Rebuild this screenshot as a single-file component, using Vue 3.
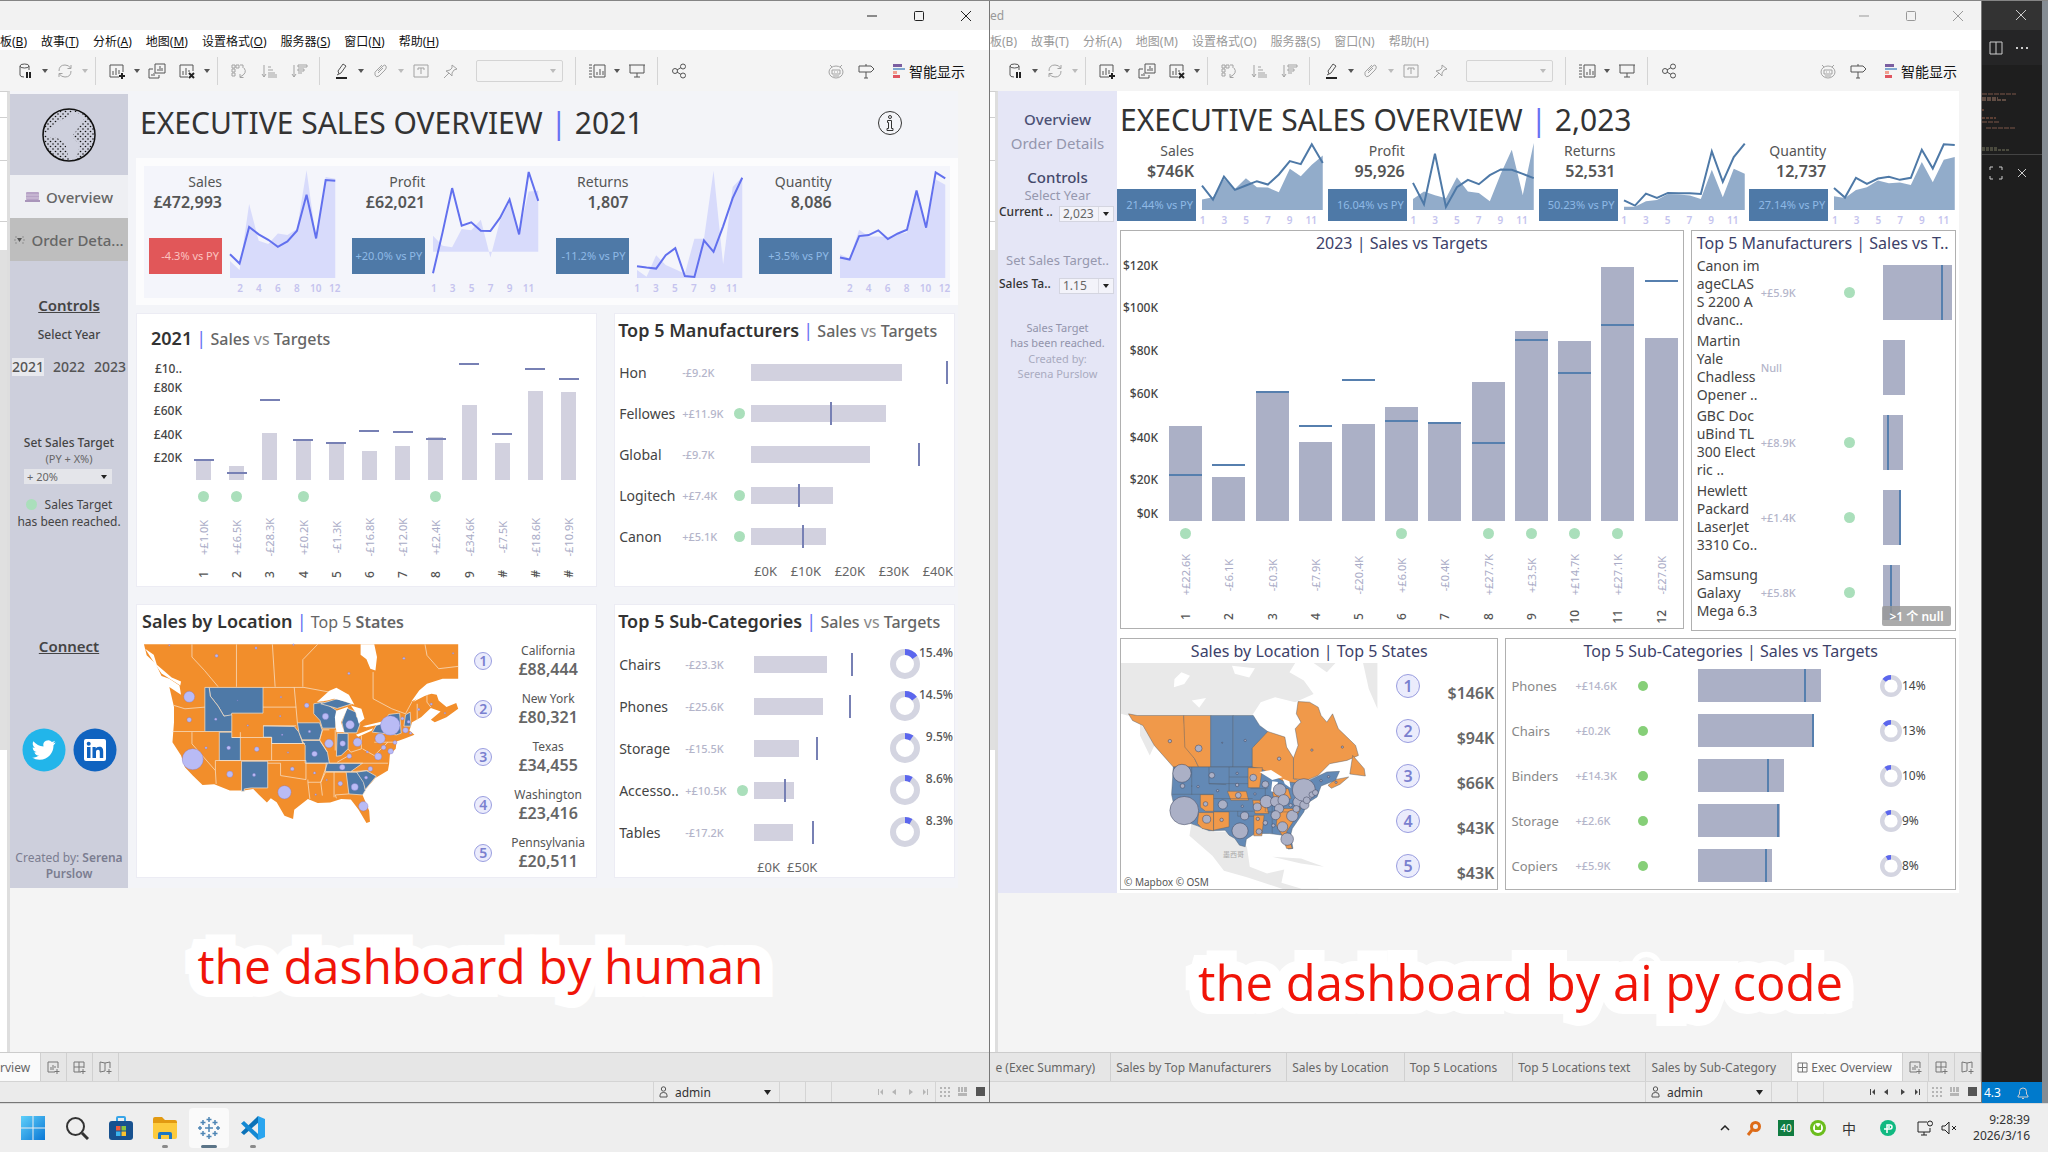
<template>
  <div class="desktop">
    <div class="stage">
      <section v-for="win in windows" :key="win.kind" class="window" :class="win.kind">
        <header class="titlebar">
          <span class="doc-name">{{ win.docName }}</span>
          <button class="win-btn" aria-label="Minimize">
            <svg width="12" height="12" viewBox="0 0 12 12"><path d="M1 6h10" /></svg>
          </button>
          <button class="win-btn" aria-label="Maximize">
            <svg width="12" height="12" viewBox="0 0 12 12"><rect x="1.5" y="1.5" width="9" height="9" rx="1" /></svg>
          </button>
          <button class="win-btn" aria-label="Close">
            <svg width="12" height="12" viewBox="0 0 12 12"><path d="M1 1l10 10M11 1L1 11" /></svg>
          </button>
        </header>

        <nav class="menubar">
          <a v-for="m in menus" :key="m.key" href="#">{{ m.label }}(<span>{{ m.key }}</span>)</a>
        </nav>

        <div class="toolbar">
          <template v-for="(t, i) in tools" :key="i">
            <span v-if="t.name === 'sep'" class="sep"></span>
            <button v-else-if="t.name === 'caret'" class="caret" :class="{ off: t.off }" aria-label="More">
              <svg width="6" height="4" viewBox="0 0 6 4"><path d="M0 0h6L3 4z" /></svg>
            </button>
            <button v-else-if="t.name === 'combo'" class="combo" aria-label="Fit">
              <svg width="6" height="4" viewBox="0 0 6 4"><path d="M0 0h6L3 4z" /></svg>
            </button>
            <button v-else class="tool" :class="{ off: t.off }" :aria-label="t.name">
              <svg width="18" height="16" viewBox="0 0 18 16">
                <path :d="icons[t.name]" />
                <path v-if="heavy[t.name]" class="heavy" :d="heavy[t.name]" />
              </svg>
            </button>
          </template>
          <span class="spring"></span>
          <button class="tool off" aria-label="Assistant">
            <svg width="18" height="16" viewBox="0 0 18 16"><path :d="icons.robot" /></svg>
          </button>
          <button class="tool sign" aria-label="Guide">
            <svg width="18" height="16" viewBox="0 0 18 16"><path :d="icons.sign" /></svg>
          </button>
          <button class="show-me">
            <svg width="12" height="14" viewBox="0 0 12 14">
              <rect width="9" height="3" fill="#7b5ea0" />
              <rect y="4" width="12" height="2" fill="#7fa8d0" />
              <rect y="7" width="4" height="3" fill="#f0a090" />
              <rect y="11" width="7" height="3" fill="#e05560" />
            </svg>
            智能显示
          </button>
        </div>

        <div class="body">
          <div class="shelf"><i></i><i></i><i></i><i></i></div>
          <div class="view">
            <div class="dashboard">
              <aside v-if="win.kind === 'human'" class="side">
                <div class="logo">
                  <svg width="54" height="54" viewBox="0 0 54 54">
                    <defs>
                      <pattern id="dots" width="5" height="5" patternUnits="userSpaceOnUse">
                        <circle cx="1" cy="1" r="0.8" fill="#111" />
                        <circle cx="3.5" cy="3.5" r="0.8" fill="#111" />
                      </pattern>
                    </defs>
                    <circle cx="27" cy="27" r="26" fill="url(#dots)" />
                    <path d="M31 3q8 3 12 7-6 6-8 12l-5 6q4 6 8 8-1 8-5 16-6 0-7-4 0-10-6-15-7-6-14-3l-3-4q8-10 18-15 8-2 10-8z" fill="#ced0dd" />
                    <circle cx="27" cy="27" r="26" fill="none" stroke="#111" stroke-width="1.5" />
                  </svg>
                </div>
                <button class="nav-item current">
                  <svg width="15" height="10" viewBox="0 0 15 10">
                    <rect x="1" width="13" height="8" rx="1" fill="#b7a3c6" />
                    <path d="M1 3h13M1 6h13" stroke="#d3c6dc" />
                    <rect y="8" width="15" height="2" fill="#a995ba" />
                  </svg>
                  Overview
                </button>
                <button class="nav-item dim">
                  <svg width="11" height="8" viewBox="0 0 11 8">
                    <path d="M1 1h2M1 7h2M8 1h2M8 7h2M1 3v2M10 3v2" stroke="#8f8f8f" />
                    <path d="M3 2h5L5.500 6z" fill="#555" />
                  </svg>
                  Order Deta...
                </button>
                <h3>Controls</h3>
                <p class="select-year">Select Year</p>
                <div class="years">
                  <button v-for="y in [2021, 2022, 2023]" :key="y" :class="{ on: y === year }" @click="year = y">{{ y }}</button>
                </div>
                <label class="target-label" for="uplift">Set Sales Target<small>(PY + X%)</small></label>
                <div class="picker">
                  <select id="uplift"><option>+ 20%</option></select>
                </div>
                <p class="legend"><span class="dot"></span>Sales Target<br />has been reached.</p>
                <h3 class="connect">Connect</h3>
                <div class="social">
                  <a href="#" aria-label="Twitter">
                    <svg width="44" height="44" viewBox="0 0 44 44">
                      <circle cx="22" cy="22" r="21.5" fill="#22b5ea" />
                      <path transform="translate(10 10)" fill="#fff" d="M23.6 4.6a9.6 9.6 0 0 1-2.8.8 4.9 4.9 0 0 0 2.2-2.7 9.8 9.8 0 0 1-3.1 1.2 4.9 4.9 0 0 0-8.4 4.5A14 14 0 0 1 1.4 3.2a4.9 4.9 0 0 0 1.5 6.6 4.9 4.9 0 0 1-2.2-.6v.1a4.9 4.9 0 0 0 3.9 4.8 4.9 4.9 0 0 1-2.2.1 4.9 4.9 0 0 0 4.6 3.4A9.9 9.9 0 0 1 0 19.6a14 14 0 0 0 7.5 2.2c9.1 0 14-7.5 14-14v-.6a10 10 0 0 0 2.1-2.6z" />
                    </svg>
                  </a>
                  <a href="#" aria-label="LinkedIn">
                    <svg width="44" height="44" viewBox="0 0 44 44">
                      <circle cx="22" cy="22" r="21.5" fill="#0f63c0" />
                      <rect x="11" y="11" width="22" height="22" rx="2" fill="#fff" />
                      <path fill="#0f63c0" d="M14 19h3.5v11H14zM19.5 19h3.200v1.600c.6-1 1.700-1.900 3.500-1.900 3.300 0 4 2 4 5V30h-3.400v-5.500c0-1.400-.2-2.700-1.800-2.700s-2 1.200-2 2.600V30h-3.500z" />
                      <circle cx="15.7" cy="15.7" r="2" fill="#0f63c0" />
                    </svg>
                  </a>
                </div>
                <p class="author">Created by: <b>Serena</b><br /><b>Purslow</b></p>
              </aside>

              <aside v-else class="side">
                <a class="side-link strong" href="#">Overview</a>
                <a class="side-link" href="#">Order Details</a>
                <h3>Controls</h3>
                <p class="hint">Select Year</p>
                <div class="param">
                  <label for="cy">Current ..</label>
                  <div class="picker"><select id="cy"><option>2,023</option></select></div>
                </div>
                <p class="hint gap">Set Sales Target..</p>
                <div class="param">
                  <label for="st">Sales Ta..</label>
                  <div class="picker"><select id="st"><option>1.15</option></select></div>
                </div>
                <p class="note">Sales Target<br />has been reached.</p>
                <p class="note pale">Created by:<br />Serena Purslow</p>
              </aside>

              <main class="main">
                <div class="headline">
                  <h1>EXECUTIVE SALES OVERVIEW <i>|</i> {{ win.year }}</h1>
                  <button v-if="win.kind === 'human'" class="info" aria-label="Info">
                    <svg width="26" height="26" viewBox="0 0 26 26">
                      <circle cx="13" cy="13" r="11.5" />
                      <circle cx="13" cy="7" r="1.5" />
                      <path d="M10.5 10.5h4v8h1.5v2h-6v-2h1.5v-6h-1z" />
                    </svg>
                  </button>
                </div>

                <div class="kpis">
                  <div class="kpi-inner">
                    <article v-for="k in win.kpis" :key="k.label" class="kpi">
                      <div class="kpi-text">
                        <span class="kpi-label">{{ k.label }}</span>
                        <strong>{{ k.value }}</strong>
                        <span class="badge" :class="{ bad: k.bad }">{{ k.change }}</span>
                      </div>
                      <div class="spark">
                        <svg :viewBox="`0 0 330 ${win.sparkMax}`" preserveAspectRatio="none">
                          <polygon :points="area(k.prior, win.sparkMax, k.base)" />
                          <polyline :points="line(k.current, win.sparkMax)" />
                        </svg>
                        <div class="ticks">
                          <span v-for="n in 12" :key="n">{{ n % 2 === k.odd ? n : '' }}</span>
                        </div>
                      </div>
                    </article>
                  </div>
                </div>

                <div class="cards">
                  <section class="card trend">
                    <h2><b>{{ win.titleYear }}</b> <i>|</i> <span>Sales <em>vs</em> Targets</span></h2>
                    <div class="plot-wrap">
                      <div class="y-axis">
                        <span v-for="t in win.trend.ticks" :key="t[0]" :style="{ bottom: t[1] / win.trend.max * 100 + '%' }">{{ t[0] }}</span>
                      </div>
                      <div class="months">
                        <div v-for="(m, i) in win.trend.months" :key="i" class="month">
                          <div class="column">
                            <div class="fill" :style="{ height: m[0] / win.trend.max * 100 + '%' }"></div>
                            <div class="goal" :style="{ bottom: m[1] / win.trend.max * 100 + '%' }"></div>
                          </div>
                          <div class="hit"><span v-if="m[2][0] === '+'" class="dot"></span></div>
                          <div class="diff"><span>{{ m[2] }}</span></div>
                          <div class="num"><span>{{ m[3] }}</span></div>
                        </div>
                      </div>
                    </div>
                  </section>

                  <section class="card makers">
                    <h2>
                      <b>Top 5 Manufacturers</b> <i>|</i>
                      <span v-if="win.kind === 'human'"> Sales <em>vs</em> Targets</span>
                      <span v-else> Sales vs T..</span>
                    </h2>
                    <div class="rows">
                      <div v-for="r in win.makers.rows" :key="r.name" class="row">
                        <span class="name">{{ r.name }}</span>
                        <span class="delta">{{ r.diff }}</span>
                        <span><span v-if="r.diff[0] === '+'" class="dot"></span></span>
                        <div class="track">
                          <div class="fill" :style="{ width: r.bar / win.makers.max * 100 + '%' }"></div>
                          <div v-if="r.goal" class="goal" :style="{ left: r.goal / win.makers.max * 100 + '%' }"></div>
                        </div>
                      </div>
                    </div>
                    <div v-if="win.kind === 'human'" class="x-axis">
                      <span>£0K</span><span>£10K</span><span>£20K</span><span>£30K</span><span>£40K</span>
                    </div>
                    <button v-else class="null-tag">&gt;1 个 null</button>
                  </section>

                  <section class="card location">
                    <h2><b>Sales by Location</b> <i>|</i> <span>Top 5 <strong>States</strong></span></h2>
                    <div class="geo">
                      <svg v-if="win.kind === 'human'" class="map" viewBox="370 160 815 560" preserveAspectRatio="none">
                        <path class="land" d="M375 167H1180V270L1140 270 1100 285 1080 305 1060 338 1090 322 1112 315 1125 318 1130 335 1150 355 1175 343 1180 360 1150 385 1120 400 1110 393 1135 368 1110 358 1085 385 1062 400 1055 425 1068 438 1045 448 1022 458 1020 480 1005 497 1003 525 1000 545 968 567 940 605 935 618 952 665 954 698 945 702 925 662 905 632 880 630 852 641 820 642 795 630 760 662 757 690 735 680 715 640 700 628 690 641 670 618 655 600 630 605 595 605 555 586 525 588 500 560 480 535 470 500 448 460 452 400 452 355 440 295 470 318 466 290 440 270 420 262 405 225 382 200z" />
                        <g class="blue">
                          <path d="M542 296H680V373H600L598 382H580L565 352 545 322z" />
                          <path d="M531 296h11l3 26 20 30 15 30 20-4V428H531z" />
                          <path d="M568 430H600V446H622V515H568z" />
                          <path d="M625 517H692V597H650L632 600V607H625z" />
                          <path d="M681 411l79 2 12 17 10 34H702V445H681z" />
                          <path d="M768 402h57l7 23-7 28H780l-8-23z" />
                          <path d="M780 455h45l20 35 5 33H788V470z" />
                          <path d="M810 345l25-5 33 25-2 53H832l-6-23-16-20z" />
                          <path d="M828 345l42-15 38 15-38 14z" />
                          <path d="M888 432l-6-32 13-42 23 12 2 15 5-5 3 28-8 24z" />
                          <path d="M870 434H898V480L880 500 868 502z" />
                          <path d="M960 430l10-20 20-8 12-25 28-4 4 60-12 5z" />
                          <path d="M1045 378l12-8 2 42h-18z" />
                          <path d="M842 523h93l-30 25h-65z" />
                          <path d="M893 550h29l18 25 2 30-7 13-35-3z" />
                          <path d="M920 550l25-5 25 17-28 40-5-22z" />
                        </g>
                        <path class="border" d="M498 167V205L530 245 565 294M612 167V294M704 167L711 294M820 167L782 213V294M452 350L480 360 531 355M448 428H531M498 430V465L558 545 560 585M568 515H558V545M622 446V430M600 446H702V515H568M702 464H788M680 355H765M760 296L768 402M692 523H725V560L790 572V515H702M790 523H845L828 580H795V572M795 580L800 630M828 580L832 620M862 550V625M893 550H840L828 580M900 615L865 618 868 628M850 523H1000M898 480L905 490 932 480V440M935 480L965 500 1000 460M965 460H1018M850 423H832L825 453 845 490M865 423V485M962 250V330L1010 360 1045 375M680 411H765M680 296H785L850 310M1095 167L1100 200 1130 240 1180 233M1062 338L1045 375M1075 345V395M1100 318V340L1110 355M905 548L955 545M900 500L870 520" />
                        <g class="water">
                          <path d="M930 167H965L972 205 968 245 955 240 945 212 930 198z" />
                          <path d="M818 340L850 306 868 297 900 318 914 348 890 338 862 330 845 335z" />
                          <path d="M868 366L898 354 880 400 888 430 868 430 864 385z" />
                          <path d="M905 350L932 360 940 390 925 404 918 372z" />
                          <path d="M935 412L985 398 988 405 945 415zM918 438L962 418 958 426 924 444z" />
                          <path d="M378 180l22 18 8 30 38 38 24 12-2 12-48-36-18-30z" />
                          <path d="M1064 340l45-46 40-20 30 2v8l-35 8-50 30z" />
                        </g>
                        <ellipse v-for="(b, i) in usBubbles" :key="i" class="bubble" :cx="b[0]" :cy="b[1]" :rx="b[2]" :ry="b[2] * 1.17" />
                      </svg>
                      <div v-else class="map-box">
                        <svg class="map" viewBox="37 122 447 680" preserveAspectRatio="none">
                          <path class="grey" d="M37 122H340L330 150 355 175 372 215 340 240 305 225 280 240 265 280H48L37 275zM372 122H410L395 150zM458 122H483V260L468 200z" />
                          <path class="grey" d="M160 600l30 28 28 2 38 45 5 60 30 20 30-12-5 40 35 18h30l-10 8h-40l-75-42-40-20-20-45-40-60zM300 705l50 5 40 25-40-10zM70 300l25 70-8 30-17-60z" />
                          <path class="water" d="M130 170l12-20 15 10-10 25-18 10zM160 235l25-8-12 30zM230 130l40 8-10 28-25-12z" />
                          <g class="amber">
                            <path d="M50 275l15 5h81l4 75 22 80h-44l-33-65-20-60-18-15z" />
                            <path d="M146 280h47v155h-21l-7-25-17-35z" />
                            <path d="M265 378l27-50 30 17 3 30 12 33v62l18 8-14 12-26-14-15-18-20-18h-15z" />
                            <path d="M337 408l8-38-5-50 10-20-8-25 3-37 20 2 15 15 5 25 10 20 10-25 10 45 15 25 15 25 5 30-20 15-30 10-20 35-20 15-23-5z" />
                            <path d="M440 400l20 40 2 22-27-6zM397 490l12-17 24-8-15 22-15 12z" />
                          </g>
                          <g class="navy">
                            <path d="M193 280h39v155h-39z" />
                            <path d="M232 280h35l11 30 14 18-27 50v57h-33z" />
                            <path d="M128 435h137l15 5 20 20 20 18 32 7 18-15 25-20 22-2-7 27-25 17-7 33-18 20-5 25-20 50-3 20 4 40-8 2-10-42-23-5-25 0-15 17-2 23-10-5-8-20-10-10-7-15-28 2-20-15-20-12-20-42-5-40z" />
                          </g>
                          <g class="amber">
                            <path d="M258 437h25l-5 60h-20z" />
                            <path d="M222 508h33l4 27h-31z" />
                            <path d="M175 518h23v50h-14l-9-12z" />
                            <path d="M172 572h26v55l-20-7-8-15z" />
                            <path d="M198 570h27v45l-27 10z" />
                            <path d="M266 535h22l6 40h-24zM268 580h18l-4 62h-14z" />
                            <path d="M300 500h28l5 30-30 10zM310 560h40l-10 30-15 40 10 50-10 0-8-40-10-30z" />
                          </g>
                          <path class="edge" d="M160 435v60M190 435v50l30 3M126 517h72M160 490v28M225 435v50M190 485h68M225 465h33M225 485v23M198 530h68M228 568h40M198 568h30M240 568v15h28M288 500v70M300 535v100M262 500h30M312 540v30M290 570h40" />
                          <path class="water" d="M278 450l20-6 20 22-18 8zM300 478l10 2-4 32-8-4zM318 470l12 8 2 20-10-12z" />
                          <ellipse v-for="(b, i) in naBubbles" :key="i" class="bubble" :cx="b[0]" :cy="b[1]" :rx="b[2]" :ry="b[2] * 1.7" />
                        </svg>
                        <span class="country">墨西哥</span>
                        <small>© Mapbox © OSM</small>
                      </div>
                      <ol class="states">
                        <li v-for="(s, i) in win.states" :key="i">
                          <span class="rank">{{ i + 1 }}</span>
                          <span class="state"><span v-if="s[0]">{{ s[0] }}</span><b>{{ s[1] }}</b></span>
                        </li>
                      </ol>
                    </div>
                  </section>

                  <section class="card subcats">
                    <h2><b>Top 5 Sub-Categories</b> <i>|</i> <span>Sales <em>vs</em> Targets</span></h2>
                    <div class="rows">
                      <div v-for="r in win.subcats.rows" :key="r.name" class="row">
                        <span class="name">{{ r.name }}</span>
                        <span class="delta">{{ r.diff }}</span>
                        <span><span v-if="r.diff[0] === '+'" class="dot"></span></span>
                        <div class="track">
                          <div class="fill" :style="{ width: r.bar / win.subcats.max * 100 + '%' }"></div>
                          <div class="goal" :style="{ left: r.goal / win.subcats.max * 100 + '%' }"></div>
                        </div>
                        <div class="share">
                          <svg viewBox="0 0 30 30">
                            <circle cx="15" cy="15" r="12" />
                            <circle class="slice" cx="15" cy="15" r="12" pathLength="100" :stroke-dasharray="`${parseFloat(r.share)} 100`" />
                          </svg>
                          <span>{{ r.share }}</span>
                        </div>
                      </div>
                    </div>
                    <div v-if="win.kind === 'human'" class="x-axis"><span>£0K</span><span>£50K</span></div>
                  </section>
                </div>
              </main>
            </div>
            <p class="caption">{{ win.caption }}</p>
          </div>
        </div>

        <nav class="sheets">
          <a v-for="s in win.sheets" :key="s" href="#" :class="{ active: s === win.sheet }">
            <svg v-if="s === 'Exec Overview'" width="11" height="11" viewBox="0 0 11 11"><path d="M1 1h9v9H1zM5.5 1v9M1 5.5h9" /></svg>{{ s }}
          </a>
          <button v-for="n in newSheet" :key="n.label" :aria-label="n.label">
            <svg width="13" height="13" viewBox="0 0 13 13"><path :d="n.d" /></svg>
          </button>
        </nav>

        <footer class="status">
          <button class="user">
            <svg width="9" height="12" viewBox="0 0 9 12"><circle cx="4.5" cy="3" r="2.2" /><path d="M1 11V9q0-2.500 3.500-2.500T8 9v2z" /></svg>
            admin
            <svg class="tri" width="7" height="5" viewBox="0 0 7 5"><path d="M0 0h7L3.500 5z" /></svg>
          </button>
          <span class="cell"></span><span class="cell"></span>
          <span class="pager">
            <svg width="54" height="8" viewBox="0 0 54 8"><path d="M1 1v6h1V1zM6 1v6L3 4zM19 1v6l-4-3zM32 1v6l4-3zM46 1v6l3-3zM50 1v6h1V1z" /></svg>
          </span>
          <span class="modes">
            <svg width="46" height="10" viewBox="0 0 46 10">
              <path fill="#b5b5b5" d="M0 0h2v2H0zM4 0h2v2H4zM8 0h2v2H8zM0 4h2v2H0zM4 4h2v2H4zM8 4h2v2H8zM0 8h2v2H0zM4 8h2v2H4zM8 8h2v2H8zM18 0h2v5h-2zM21 0h2v5h-2zM24 0h3v5h-3zM18 6h9v3h-9z" />
              <path fill="#555" d="M36 0h9v9h-9z" />
            </svg>
          </span>
        </footer>
      </section>

      <section class="editor">
        <div class="editor-title">
          <svg width="12" height="12" viewBox="0 0 12 12"><path d="M1 1l10 10M11 1L1 11" /></svg>
        </div>
        <div class="editor-tabs">
          <svg width="14" height="14" viewBox="0 0 14 14"><path d="M1 1h12v12H1zM7 1v12" /></svg>
          <svg width="14" height="14" viewBox="0 0 14 14"><path d="M1 7h2M6 7h2M11 7h2" stroke-width="2" /></svg>
        </div>
        <div class="minimap">
          <svg width="36" height="62" viewBox="0 0 36 62">
            <path d="M0 2h34M0 30h18M4 36h29" stroke="#7c5648" stroke-dasharray="5 1" />
            <path d="M0 6h16M0 8h24" stroke="#a07a68" stroke-dasharray="4 1" />
            <path d="M0 26h14M0 18h2" stroke="#98604a" stroke-dasharray="3 1" />
            <path d="M0 56h16M0 58h28" stroke="#77775f" stroke-dasharray="3 1" />
          </svg>
        </div>
        <div class="editor-panel">
          <svg width="14" height="14" viewBox="0 0 14 14"><path d="M1 4V1h3M10 1h3v3M13 10v3h-3M4 13H1v-3" /></svg>
          <svg width="12" height="12" viewBox="0 0 12 12"><path d="M2 2l8 8M10 2l-8 8" /></svg>
        </div>
        <div class="editor-status">
          <span>4.3</span>
          <svg width="14" height="14" viewBox="0 0 14 14"><path d="M2 11V10l1.500-2V5.500a3.500 3.500 0 0 1 7 0V8l1.500 2v1zM6 12.500h2" /></svg>
        </div>
      </section>
      <div class="edge-strip"></div>
    </div>

    <footer class="taskbar">
      <div class="apps">
        <button aria-label="Start">
          <svg width="24" height="24" viewBox="0 0 24 24">
            <defs><linearGradient id="win" x1="0" y1="0" x2="1" y2="1"><stop stop-color="#5fd0fa" /><stop offset="1" stop-color="#0a77d5" /></linearGradient></defs>
            <path fill="url(#win)" d="M0 0h11.500v11.500H0zM12.500 0H24v11.500H12.500zM0 12.500h11.500V24H0zM12.500 12.500H24V24H12.500z" />
          </svg>
        </button>
        <button aria-label="Search">
          <svg width="24" height="24" viewBox="0 0 24 24" fill="none" stroke="#333" stroke-width="2"><circle cx="10.5" cy="10.5" r="8.5" /><path d="M17 17l6 6" stroke-width="3" /></svg>
        </button>
        <button aria-label="Store">
          <svg width="24" height="24" viewBox="0 0 24 24">
            <path d="M8 6V2q0-1 1-1h6q1 0 1 1v4" fill="none" stroke="#38a5e8" stroke-width="2" />
            <rect y="5" width="24" height="19" rx="3" fill="#17518f" />
            <path fill="#f05a3c" d="M7 10h4.500v4.500H7z" /><path fill="#8bc53f" d="M12.500 10H17v4.500h-4.500z" /><path fill="#3cb4ee" d="M7 15.500h4.500V20H7z" /><path fill="#fbc22d" d="M12.500 15.500H17V20h-4.500z" />
          </svg>
        </button>
        <button class="open" aria-label="Explorer">
          <svg width="26" height="24" viewBox="0 0 26 24">
            <path fill="#e29a12" d="M1 3q0-2 2-2h7l3 3h10q2 0 2 2v6H1z" /><path fill="#fdcb3d" d="M1 7h24v14q0 2-2 2H3q-2 0-2-2z" /><path fill="#1c77c5" d="M6 23v-5q0-2 2-2h10q2 0 2 2v5h-3v-4H9v4z" />
          </svg>
        </button>
        <button class="open active" aria-label="Tableau">
          <svg width="24" height="24" viewBox="0 0 24 24" fill="none" stroke="#4f86b5" stroke-width="1.5">
            <path d="M12 8v8M8 12h8M12 1v5M9.500 3.500h5M12 18v5M9.500 20.500h5M1 12h4M3 10v4M19 12h4M21 10v4M6 4v5M3.500 6.500h5M18 4v5M15.500 6.500h5M6 15v5M3.500 17.500h5M18 15v5M15.500 17.500h5" />
          </svg>
        </button>
        <button class="open" aria-label="Code">
          <svg width="24" height="24" viewBox="0 0 24 24">
            <path fill="#0b72b8" d="M17 0L1 15.500 0 16.500 3 19 18 6z" /><path fill="#1489d3" d="M3 5L0 7.500 17 24v-6z" /><path fill="#2aa5ef" d="M17 0l7 3v18l-7 3z" />
          </svg>
        </button>
      </div>
      <div class="tray">
        <svg width="10" height="6" viewBox="0 0 10 6" fill="none" stroke="#222" stroke-width="1.5"><path d="M1 5l4-4 4 4" /></svg>
        <svg width="16" height="16" viewBox="0 0 16 16" fill="none" stroke="#dd6b18" stroke-width="3"><circle cx="9.5" cy="6.5" r="4" /><path d="M6 10l-4 5" /></svg>
        <span class="temp">40</span>
        <svg width="16" height="16" viewBox="0 0 16 16"><circle cx="8" cy="8" r="8" fill="#6bbd1d" /><circle cx="8" cy="8" r="5" fill="#fff" /><path d="M5 4l3 3 3-3v6H5z" fill="#6bbd1d" /></svg>
        <span class="ime">中</span>
        <svg class="wide" width="16" height="16" viewBox="0 0 16 16"><circle cx="8" cy="8" r="8" fill="#10b981" /><path d="M7 13V5h3q2 0 2 2t-2 2H4M8 7h2" stroke="#fff" stroke-width="1.5" fill="none" /></svg>
        <svg width="16" height="16" viewBox="0 0 16 16" fill="none" stroke="#222"><path d="M10 2H1v10h12V8M4 15h6M7 12v3" /><circle cx="13" cy="3.5" r="2.5" /></svg>
        <svg width="16" height="14" viewBox="0 0 16 14" fill="none" stroke="#222"><path d="M1 5h3l4-4v12L4 9H1zM11 5l4 4M15 5l-4 4" /></svg>
        <div class="clock">9:28:39<br />2026/3/16</div>
      </div>
    </footer>
  </div>
</template>

<script setup>
import { ref } from 'vue'

const year = ref(2021)

const menus = [
  { label: '板', key: 'B' },
  { label: '故事', key: 'T' },
  { label: '分析', key: 'A' },
  { label: '地图', key: 'M' },
  { label: '设置格式', key: 'O' },
  { label: '服务器', key: 'S' },
  { label: '窗口', key: 'N' },
  { label: '帮助', key: 'H' }
]

const icons = {
  pause: 'M13 7V3Q13 1 8.500 1T4 3V12Q4 14 8 14M4 3Q4 5 8.500 5T13 3',
  refresh: 'M3 8Q3 2 9 2q4 0 5.500 3M15 8q0 6-6 6-4 0-5.500-3M15 2v3.500h-3.500M3 14v-3.500h3.500',
  add: 'M11 14H2V2h13v7M5 12V8M8 12V5M11 11V7',
  copy: 'M7 10V1h10v9zM10 8V6M12 8V3M14 8V5M5 6H1v9h10v-3M4 13v-2M6 13v-3',
  clear: 'M10 14H2V2h13v6M5 12V8M8 12V5M11 9V7',
  swap: 'M2 2h3v3H2zM6 2h3v3H6zM10 2h3v3M2 6h3v3H2zM2 10h3v3H2zM14 5q4 5-4 9M10 11v3.500h3.500',
  asc: 'M4 2v12M2 11l2 3 2-3M8 14h9M8 12h9M8 10h7M8 7h5M8 4h3',
  desc: 'M4 2v12M2 11l2 3 2-3M8 2h9v2H8zM8 6h6v2H8zM8 10h4',
  pen: 'M7 11l-1-3 5-7 3 2-5 7zM7 11l-2 1',
  clip: 'M6 8l5-5q2-2 3 0t-1 4l-6 6q-3 2-4-1t2-5l5-5M6 10l5-5',
  text: 'M2 2h14v12H2zM6 5h6M9 5v6M6 5v2M12 5v2',
  pin: 'M10 2l5 4-3 1-2 3v3l-3-3-5 5 5-5-3-2 4-1 2-2z',
  cards: 'M6 2h11v12H6zM1 2h3M1 5h3M1 8h3M1 11h3M1 14h3M9 12V9M12 12V6M15 12V8',
  present: 'M1 2h16M2 2v8h14V2M9 10v4M6 14h6',
  share: 'M2.500 8a2.500 2.500 0 1 0 5 0a2.500 2.500 0 1 0-5 0M10.500 3.500a2.500 2.500 0 1 0 5 0a2.500 2.500 0 1 0-5 0M10.500 12.500a2.500 2.500 0 1 0 5 0a2.500 2.500 0 1 0-5 0M7 7l4-2.500M7 9l4 2.500',
  robot: 'M3 2l2 2M15 2l-2 2M2 9a7 6 0 1 0 14 0a7 6 0 1 0-14 0M5 7h8v4H5zM6 13h6M7 9h1M10 9h1',
  sign: 'M2 3h12l3 3-3 3H2zM9 1v2M9 9v6M7 15h4'
}

const heavy = {
  pause: 'M11 9v6M14 9v6',
  add: 'M14 10v6M11 13h6',
  clear: 'M11 10l5 5M16 10l-5 5',
  pen: 'M4 15h11'
}

const tools = [
  { name: 'pause' }, { name: 'caret' }, { name: 'refresh', off: true }, { name: 'caret', off: true }, { name: 'sep' },
  { name: 'add' }, { name: 'caret' }, { name: 'copy' }, { name: 'clear' }, { name: 'caret' }, { name: 'sep' },
  { name: 'swap', off: true }, { name: 'asc', off: true }, { name: 'desc', off: true }, { name: 'sep' },
  { name: 'pen' }, { name: 'caret' }, { name: 'clip', off: true }, { name: 'caret', off: true },
  { name: 'text', off: true }, { name: 'pin', off: true }, { name: 'combo' }, { name: 'sep' },
  { name: 'cards' }, { name: 'caret' }, { name: 'present' }, { name: 'sep' }, { name: 'share' }
]

const newSheet = [
  { label: 'New worksheet', d: 'M8 11H1V1h10v6M4 9V6M6 9V4M8 7V5M10 8v5M7.500 10.500h5' },
  { label: 'New dashboard', d: 'M8 11H1V1h10v6M6 1v10M1 6h10M10 8v5M7.500 10.500h5' },
  { label: 'New story', d: 'M6 10L1 11V1l5 1 5-1v6M6 2v8M10 8v5M7.500 10.500h5' }
]

const windows = [
  {
    kind: 'human',
    docName: '',
    year: '2021',
    titleYear: '2021',
    caption: 'the dashboard by human',
    sheets: ['rview'],
    sheet: 'rview',
    sparkMax: 322,
    kpis: [
      {
        label: 'Sales', value: '£472,993', change: '-4.3% vs PY', bad: true, odd: 0, base: 0,
        current: [71, 43, 152, 130, 114, 93, 109, 141, 248, 118, 292, 290],
        prior: [51, 24, 221, 111, 101, 133, 128, 146, 321, 116, 301, 296]
      },
      {
        label: 'Profit', value: '£62,021', change: '+20.0% vs PY', odd: 1, base: 78,
        current: [14, 136, 268, 156, 166, 141, 140, 179, 234, 130, 316, 230],
        prior: [126, 96, 92, 146, 142, 174, 61, 171, 226, 136, 258, 260]
      },
      {
        label: 'Returns', value: '1,807', change: '-11.2% vs PY', odd: 1, base: 0,
        current: [35, 31, 28, 68, 89, 6, 3, 112, 78, 154, 238, 299],
        prior: [24, 4, 68, 39, 26, 13, 117, 117, 320, 41, 271, 301]
      },
      {
        label: 'Quantity', value: '8,086', change: '+3.5% vs PY', odd: 0, base: 0,
        current: [61, 55, 125, 128, 142, 116, 132, 144, 261, 150, 315, 297],
        prior: [71, 58, 144, 124, 124, 122, 130, 136, 256, 148, 294, 278]
      }
    ],
    trend: {
      max: 120,
      ticks: [['£10..', 112], ['£80K', 93], ['£60K', 70], ['£40K', 46], ['£20K', 23]],
      months: [
        [21, 19, '+£1.0K', '1'], [14, 6, '+£6.5K', '2'], [47, 79, '-£28.3K', '3'], [39, 39, '+£0.2K', '4'],
        [36, 36, '-£1.3K', '5'], [29, 48, '-£16.8K', '6'], [34, 47, '-£12.0K', '7'], [43, 40, '+£2.4K', '8'],
        [75, 115, '-£34.6K', '9'], [37, 45, '-£7.5K', '#'], [89, 110, '-£18.6K', '#'], [88, 100, '-£10.9K', '#']
      ]
    },
    makers: {
      max: 200,
      rows: [
        { name: 'Hon', diff: '-£9.2K', bar: 149, goal: 193 },
        { name: 'Fellowes', diff: '+£11.9K', bar: 134, goal: 78 },
        { name: 'Global', diff: '-£9.7K', bar: 118, goal: 165 },
        { name: 'Logitech', diff: '+£7.4K', bar: 81, goal: 46 },
        { name: 'Canon', diff: '+£5.1K', bar: 74, goal: 50 }
      ]
    },
    states: [
      ['California', '£88,444'], ['New York', '£80,321'], ['Texas', '£34,455'], ['Washington', '£23,416'], ['Pennsylvania', '£20,511']
    ],
    subcats: {
      max: 135,
      rows: [
        { name: 'Chairs', diff: '-£23.3K', bar: 72, goal: 96, share: '15.4%' },
        { name: 'Phones', diff: '-£25.6K', bar: 68, goal: 94, share: '14.5%' },
        { name: 'Storage', diff: '-£15.5K', bar: 45, goal: 61, share: '9.5%' },
        { name: 'Accesso..', diff: '+£10.5K', bar: 40, goal: 30, share: '8.6%' },
        { name: 'Tables', diff: '-£17.2K', bar: 39, goal: 57, share: '8.3%' }
      ]
    }
  },
  {
    kind: 'script',
    docName: 'ed',
    year: '2,023',
    titleYear: '2023',
    caption: 'the dashboard by ai py code',
    sheets: ['e (Exec Summary)', 'Sales by Top Manufacturers', 'Sales by Location', 'Top 5 Locations', 'Top 5 Locations text', 'Sales by Sub-Category', 'Exec Overview'],
    sheet: 'Exec Overview',
    sparkMax: 200,
    kpis: [
      {
        label: 'Sales', value: '$746K', change: '21.44% vs PY', odd: 1, base: 0,
        current: [73, 31, 100, 60, 73, 86, 76, 106, 146, 137, 196, 140],
        prior: [31, 38, 93, 63, 95, 68, 67, 53, 123, 101, 135, 163]
      },
      {
        label: 'Profit', value: '95,926', change: '16.04% vs PY', odd: 1, base: 0,
        current: [81, 17, 168, 9, 68, 90, 77, 104, 121, 120, 108, 95],
        prior: [33, 55, 44, 35, 98, 55, 51, 26, 108, 180, 45, 200]
      },
      {
        label: 'Returns', value: '52,531', change: '50.23% vs PY', odd: 1, base: 0,
        current: [29, 13, 49, 36, 51, 50, 50, 48, 175, 84, 158, 198],
        prior: [10, 10, 26, 30, 48, 46, 43, 33, 120, 38, 123, 108]
      },
      {
        label: 'Quantity', value: '12,737', change: '27.14% vs PY', odd: 1, base: 0,
        current: [66, 37, 96, 78, 94, 99, 90, 96, 180, 124, 196, 194],
        prior: [41, 36, 60, 68, 88, 80, 82, 75, 143, 83, 150, 158]
      }
    ],
    trend: {
      max: 263,
      ticks: [['$120K', 255], ['$100K', 213], ['$80K', 170], ['$60K', 128], ['$40K', 84], ['$20K', 42], ['$0K', 8]],
      months: [
        [95, 45, '+£22.6K', '1'], [44, 55, '-£6.1K', '2'], [130, 128, '-£0.3K', '3'], [79, 94, '-£7.9K', '4'],
        [97, 139, '-£20.4K', '5'], [114, 99, '+£6.0K', '6'], [98, 97, '-£0.4K', '7'], [138, 77, '+£27.7K', '8'],
        [189, 179, '+£3.5K', '9'], [179, 146, '+£14.7K', '10'], [253, 194, '+£27.1K', '11'], [182, 238, '-£27.0K', '12']
      ]
    },
    makers: {
      max: 69,
      rows: [
        { name: 'Canon im\nageCLAS\nS 2200 A\ndvanc..', diff: '+£5.9K', bar: 69, goal: 58 },
        { name: 'Martin\nYale\nChadless\nOpener ..', diff: 'Null', bar: 22 },
        { name: 'GBC Doc\nuBind TL\n300 Elect\nric ..', diff: '+£8.9K', bar: 20, goal: 4 },
        { name: 'Hewlett\nPackard\nLaserJet\n3310 Co..', diff: '+£1.4K', bar: 17, goal: 16 },
        { name: 'Samsung\nGalaxy\nMega 6.3', diff: '+£5.8K', bar: 17, goal: 7 }
      ]
    },
    states: [['', '$146K'], ['', '$94K'], ['', '$66K'], ['', '$43K'], ['', '$43K']],
    subcats: {
      max: 181,
      rows: [
        { name: 'Phones', diff: '+£14.6K', bar: 122, goal: 105, share: '14%' },
        { name: 'Chairs', diff: '+£0.2K', bar: 115, goal: 113, share: '13%' },
        { name: 'Binders', diff: '+£14.3K', bar: 85, goal: 68, share: '10%' },
        { name: 'Storage', diff: '+£2.6K', bar: 81, goal: 78, share: '9%' },
        { name: 'Copiers', diff: '+£5.9K', bar: 73, goal: 66, share: '8%' }
      ]
    }
  }
]

// x, y, r
const usBubbles = [
  [440, 170, 2], [561, 201, 4], [662, 178, 3], [758, 168, 2], [900, 254, 3], [1041, 209, 3], [1167, 194, 2],
  [491, 324, 14], [491, 393, 6], [559, 391, 3], [615, 335, 1], [641, 410, 2], [534, 477, 3], [500, 511, 27],
  [592, 477, 5], [664, 481, 6], [595, 556, 8], [657, 558, 4], [726, 325, 2], [724, 382, 2], [729, 438, 2],
  [744, 491, 2], [755, 540, 5], [735, 610, 17], [792, 350, 6], [799, 428, 3], [812, 495, 7], [812, 552, 3],
  [815, 617, 2], [840, 383, 8], [903, 408, 11], [849, 464, 11], [884, 464, 7], [922, 460, 11], [901, 502, 6],
  [883, 535, 7], [843, 573, 2], [878, 584, 6], [915, 594, 9], [944, 566, 4], [955, 540, 6], [937, 652, 12],
  [975, 503, 9], [947, 489, 3], [980, 449, 13], [1006, 410, 25], [989, 476, 6], [1007, 487, 7], [1018, 461, 5],
  [1037, 389, 4], [1053, 399, 4], [1045, 424, 7], [1058, 433, 3], [1079, 362, 3], [1111, 346, 3], [1146, 373, 2]
]

const naBubbles = [
  [122, 357, 3], [172, 379, 6], [213, 362, 1], [253, 355, 2], [312, 410, 3], [369, 384, 2], [422, 375, 2],
  [143, 454, 16], [195, 460, 5], [239, 454, 2], [267, 467, 6], [144, 492, 4], [171, 494, 2], [205, 506, 2],
  [239, 489, 3], [241, 520, 5], [270, 516, 2], [288, 487, 6], [147, 566, 25], [184, 546, 4], [214, 548, 8],
  [248, 553, 2], [274, 555, 7], [186, 592, 7], [212, 594, 3], [252, 582, 7], [275, 591, 3], [244, 627, 14],
  [277, 629, 5], [288, 603, 4], [302, 611, 3], [313, 504, 11], [290, 539, 11], [306, 539, 9], [320, 535, 10],
  [312, 560, 8], [306, 580, 8], [335, 582, 10], [318, 615, 9], [326, 652, 11], [345, 540, 9], [342, 561, 6],
  [356, 549, 8], [355, 504, 20], [360, 535, 6], [369, 518, 5], [375, 512, 5], [332, 550, 3], [385, 476, 2],
  [398, 464, 2], [411, 481, 2]
]

function line(values, max) {
  return values.map((v, i) => `${i * 30},${max - v}`).join(' ')
}

function area(values, max, base) {
  return `0,${max - base} ${line(values, max)} 330,${max - base}`
}
</script>

<style>
body {
  margin: 0;
  overflow: hidden;
}
</style>

<style scoped>
.desktop {
  display: flex;
  flex-direction: column;
  height: 100vh;
  background: #eeeeee;
  font-family: "Noto Sans", "Noto Sans CJK SC", sans-serif;
  color: #333;
}

.desktop * {
  box-sizing: border-box;
}

.stage {
  flex: 1;
  min-height: 0;
  display: grid;
  grid-template-columns: 990fr 992fr 60fr 6fr;
  border-top: 1px solid #858585;
}

button {
  font: inherit;
  color: inherit;
  background: none;
  border: 0;
  padding: 0;
}

a {
  color: inherit;
  text-decoration: none;
}

p, h1, h2, h3, ol {
  margin: 0;
  padding: 0;
  font-weight: 400;
}

i, em {
  font-style: normal;
}

select {
  appearance: none;
  font: inherit;
  color: inherit;
  border: 0;
  background: none;
  width: 100%;
}

/* window chrome */
.window {
  display: flex;
  flex-direction: column;
  min-width: 0;
  min-height: 0;
  overflow: hidden;
  background: #f4f4f4;
  border-right: 1px solid #777;
  border-bottom: 1px solid #777;
}

.titlebar {
  display: flex;
  height: 29px;
  background: #f2f2f2;
}

.doc-name {
  flex: 1;
  font-size: 12px;
  line-height: 30px;
  color: #999;
}

.win-btn {
  width: 47px;
  display: grid;
  place-items: center;
}

.win-btn svg {
  fill: none;
  stroke: #222;
}

.script .win-btn svg {
  stroke: #999;
}

.menubar {
  display: flex;
  gap: 14px;
  height: 20px;
  background: #fff;
  font-size: 12px;
  line-height: 23px;
  color: #111;
  white-space: nowrap;
}

.menubar span {
  text-decoration: underline;
}

.script .menubar {
  color: #999;
}

.script .menubar span {
  text-decoration: none;
}

.toolbar {
  display: flex;
  align-items: center;
  height: 41px;
  padding: 0 24px 0 10px;
}

.tool {
  width: 30px;
  height: 28px;
  display: grid;
  place-items: center;
}

.tool svg {
  fill: none;
  stroke: #555;
}

.tool .heavy {
  stroke: #222;
  stroke-width: 2;
}

.tool.off {
  opacity: 0.5;
}

.caret {
  width: 10px;
  display: grid;
  place-items: center;
}

.caret svg {
  fill: #555;
}

.caret.off svg, .combo svg {
  fill: #bbb;
}

.sep {
  width: 1px;
  height: 28px;
  margin: 0 6px 0 5px;
  background: #d4d4d4;
}

.combo {
  display: flex;
  align-items: center;
  justify-content: flex-end;
  width: 87px;
  height: 22px;
  margin: 0 7px 0 10px;
  padding-right: 6px;
  border: 1px solid #d4d4d4;
  border-radius: 2px;
}

.spring {
  flex: 1;
}

.sign {
  margin-right: 12px;
}

.show-me {
  display: flex;
  align-items: center;
  gap: 4px;
  font-size: 14px;
  color: #111;
}

.body {
  flex: 1;
  min-height: 0;
  display: flex;
}

.shelf {
  flex: none;
  width: 10px;
  border-right: 3px solid #dedede;
  border-top: 1px solid #d0d0d0;
  background: linear-gradient(#e0e0e0, #e0e0e0) 0 158px / 100% 500px no-repeat #fff;
}

.shelf i {
  display: block;
  height: 26px;
  border-bottom: 1px solid #d0d0d0;
}

.shelf i:nth-child(2) {
  height: 43px;
}

.shelf i:nth-child(3) {
  height: 61px;
}

.shelf i:nth-child(4) {
  border: 0;
}

.view {
  flex: 1;
  min-width: 0;
}

.dashboard {
  display: flex;
  margin-right: 31px;
}

.main {
  flex: 1;
  min-width: 0;
}

.caption {
  text-align: center;
  color: #f01408;
  font-family: "Open Sans", "Noto Sans", sans-serif;
  font-size: 49px;
  line-height: 64px;
  -webkit-text-stroke: 26px #fff;
  paint-order: stroke fill;
  stroke-linejoin: round;
}

/* side panel */
.side {
  flex: none;
  width: 118px;
  text-align: center;
}

.human .dashboard {
  padding-top: 3px;
  background: #f3f4f8;
}

.human .side {
  background: #cdcfdc;
  color: #444;
}

.logo {
  height: 81px;
  padding-top: 14px;
}

.nav-item {
  display: flex;
  align-items: center;
  justify-content: center;
  gap: 6px;
  width: 100%;
  height: 43px;
  font-size: 15px;
  font-weight: 500;
  color: #666;
  white-space: nowrap;
}

.nav-item.current {
  background: #eeeff3;
}

.nav-item.dim {
  background: #bebebe;
}

.human .side h3 {
  margin-top: 34px;
  font-size: 15px;
  line-height: 20px;
  font-weight: 600;
  text-decoration: underline;
}

.select-year {
  margin-top: 10px;
  font-size: 12px;
  line-height: 20px;
  font-weight: 500;
}

.years {
  display: flex;
  justify-content: space-between;
  margin: 13px 2px 0;
  font-size: 14px;
  line-height: 18px;
  font-weight: 500;
  color: #555;
}

.years .on {
  background: #e8e9ee;
}

.target-label {
  display: block;
  margin-top: 59px;
  font-size: 12px;
  line-height: 16px;
  font-weight: 500;
  white-space: nowrap;
}

.target-label small {
  display: block;
  font-size: 11px;
  font-weight: 400;
  color: #666;
}

.picker {
  position: relative;
  font-size: 11px;
  color: #666;
}

.picker::after {
  content: "";
  position: absolute;
  right: 5px;
  top: 6px;
  border: 3px solid transparent;
  border-top: 4px solid #222;
}

.human .picker {
  margin: 2px 16px 0 14px;
}

.human .picker select {
  height: 15px;
  line-height: 15px;
  background: #e4e5ea;
  padding: 0 3px;
}

.dot {
  display: inline-block;
  width: 11px;
  height: 11px;
  border-radius: 50%;
  background: #aadfbb;
}

.legend {
  margin-top: 12px;
  font-size: 12px;
  line-height: 17px;
  white-space: nowrap;
}

.legend .dot {
  margin-right: 8px;
  vertical-align: -1px;
}

.human .side .connect {
  margin-top: 106px;
}

.social {
  display: flex;
  justify-content: center;
  gap: 7px;
  margin-top: 72px;
}

.author {
  margin: 73px 0 0;
  font-size: 12px;
  line-height: 16px;
  color: #7b7d90;
  white-space: nowrap;
}

.author b {
  font-weight: 600;
}

/* headline */
h1 {
  font-size: 30px;
  line-height: 42px;
  white-space: nowrap;
  color: #333;
}

h1 i, .human h2 i {
  color: #6671f3;
}

.headline {
  display: flex;
  justify-content: space-between;
}

.human .headline {
  height: 64px;
  padding: 8px 55px 0 12px;
}

.info {
  height: 42px;
}

.info svg {
  display: block;
  fill: none;
  stroke: #333;
}

/* kpi strip */
.kpi-inner {
  display: grid;
  grid-template-columns: repeat(4, 1fr);
}

.kpi {
  display: flex;
  min-width: 0;
}

.kpi-text {
  flex: none;
  display: flex;
  flex-direction: column;
  text-align: right;
  white-space: nowrap;
  color: #555;
  font-size: 14px;
  line-height: 20px;
}

.kpi-text strong {
  font-size: 16px;
  font-weight: 600;
}

.badge {
  overflow: hidden;
  background: #4e79a7;
  color: #8fb9e6;
  font-size: 11px;
}

.badge.bad {
  background: #e15759;
  color: #fbc3c0;
}

.spark {
  flex: 1;
  min-width: 0;
}

.spark svg {
  display: block;
  width: 100%;
  overflow: visible;
}

.spark polyline {
  fill: none;
  stroke: #6270ee;
  stroke-width: 2px;
  vector-effect: non-scaling-stroke;
}

.spark polygon {
  fill: #d8dbfb;
}

.script .spark polyline {
  stroke: #4e79a7;
}

.script .spark polygon {
  fill: #92acca;
}

.ticks {
  display: grid;
  grid-template-columns: repeat(12, 1fr);
  margin: 0 -4%;
  font-size: 10px;
  line-height: 20px;
  font-weight: 600;
  color: #c5c3ee;
}

.ticks span {
  display: flex;
  justify-content: center;
  min-width: 0;
}

.human .kpis {
  margin-left: 8px;
  padding: 8px 8px 7px;
  background: #fcfcfd;
}

.human .kpi-inner {
  column-gap: 17px;
  padding: 4px 5px 0 5px;
  background: #f4f5fb;
}

.human .kpi-text {
  width: 73px;
  padding-top: 2px;
}

.human .badge {
  height: 36px;
  margin-top: 26px;
  padding-right: 3px;
  line-height: 36px;
}

.human .spark {
  margin-left: 8px;
}

.human .spark svg {
  height: 108px;
}

/* cards */
.cards {
  display: grid;
}

.card {
  min-width: 0;
  background: #fff;
}

h2 {
  white-space: nowrap;
}

.human .cards {
  grid-template-columns: 460fr 340fr;
  gap: 17px;
  margin: 8px 3px 10px 8px;
}

.human .card {
  height: 274px;
  border: 1px solid #ececf4;
}

.human h2 {
  padding: 4px 0 0 3px;
  font-size: 16px;
  line-height: 24px;
  color: #666;
}

.human h2 b {
  font-size: 18px;
  font-weight: 600;
  color: #333;
}

.human h2 i {
  font-size: 18px;
}

.human h2 span {
  font-weight: 500;
}

.human h2 em {
  font-weight: 400;
  color: #888;
}

.human .location h2 {
  padding-left: 5px;
}

.human .location h2 span {
  font-weight: 400;
}

.human h2 strong {
  font-weight: 600;
}

.human .trend {
  padding: 8px 11px 0 11px;
}

.plot-wrap {
  display: flex;
}

.y-axis {
  position: relative;
  flex: none;
  font-size: 12px;
  font-weight: 500;
  color: #444;
}

.y-axis span {
  position: absolute;
  right: 0;
  transform: translateY(50%);
}

.months {
  flex: 1;
  display: grid;
  grid-template-columns: repeat(12, 1fr);
}

.month {
  display: flex;
  flex-direction: column;
  align-items: center;
}

.column {
  position: relative;
  width: 100%;
  display: flex;
  align-items: flex-end;
  justify-content: center;
}

.column .fill {
  background: #d2d1df;
}

.column .goal {
  position: absolute;
  height: 2px;
  background: #7780b4;
}

.diff span, .num span {
  writing-mode: vertical-rl;
  transform: rotate(180deg);
}

.hit, .diff, .num {
  display: flex;
  align-items: center;
  justify-content: center;
}

.diff {
  font-size: 11px;
  color: #a9abc6;
}

.num {
  font-size: 12px;
  font-weight: 500;
  color: #555;
}

.human .plot-wrap {
  margin-top: 9px;
}

.human .y-axis {
  width: 34px;
  height: 120px;
}

.human .months {
  padding-left: 5px;
}

.human .column {
  height: 120px;
}

.human .column .fill {
  width: 15px;
}

.human .column .goal {
  width: 20px;
}

.human .hit {
  height: 32px;
}

.human .diff {
  height: 50px;
}

.human .num {
  height: 24px;
}

.row {
  display: grid;
  align-items: center;
}

.name {
  font-size: 14px;
  color: #444;
  white-space: pre;
}

.delta {
  font-size: 11px;
  font-weight: 500;
  color: #b4b5ca;
}

.row .dot {
  display: block;
}

.track {
  position: relative;
  display: flex;
  align-items: center;
}

.track .fill {
  height: 100%;
  background: #d2d1df;
}

.track .goal {
  position: absolute;
  width: 2px;
  background: #7780b4;
}

.human .rows {
  padding: 0 1px 0 4px;
}

.human .track {
  height: 17px;
}

.human .track .goal {
  height: 23px;
}

.human .makers .rows {
  margin-top: 9px;
}

.human .makers .row {
  height: 41px;
  grid-template-columns: 63px 52px 17px 1fr;
}

.x-axis {
  display: flex;
  font-size: 13px;
  line-height: 28px;
  color: #666;
}

.human .makers .x-axis {
  padding: 0 1px 0 139px;
  justify-content: space-between;
}

.human .subcats .rows {
  margin-top: 9px;
}

.human .subcats .row {
  height: 42px;
  grid-template-columns: 66px 52px 17px 1fr 63px;
}

.human .subcats .x-axis {
  gap: 7px;
  padding-left: 142px;
}

.share {
  display: flex;
}

.share svg {
  flex: none;
  width: 30px;
  height: 30px;
  fill: none;
}

.share circle {
  stroke: #d4d5e1;
  stroke-width: 6px;
  transform: rotate(-90deg);
  transform-origin: center;
}

.share .slice {
  stroke: #5b66ee;
}

.human .share span {
  flex: 1;
  margin: -3px 0 0 -3px;
  font-size: 12px;
  line-height: 14px;
  font-weight: 500;
  color: #555;
  text-align: right;
}

/* location */
.geo {
  display: flex;
}

.land {
  fill: #f28e2b;
}

.blue {
  fill: #4e79a7;
}

.blue path, .border {
  stroke: #f7e3cd;
  stroke-width: 2;
}

.border {
  fill: none;
}

.water {
  fill: #fff;
}

.bubble {
  fill: #b9bbf5;
  stroke: #8074c8;
}

.human .map {
  flex: 1;
  min-width: 0;
  height: 187px;
  margin: 8px 0 0 5px;
}

.states {
  flex: none;
  list-style: none;
}

.states li {
  display: flex;
  align-items: center;
}

.rank {
  display: grid;
  place-items: center;
  border: 1px solid #9a9ee0;
  border-radius: 50%;
  background: #ebecfc;
  color: #7a80cf;
  font-weight: 600;
}

.state {
  flex: 1;
  font-size: 12px;
  line-height: 18px;
  color: #555;
}

.state span {
  display: block;
}

.state b {
  font-size: 16px;
  font-weight: 600;
  color: #666;
}

.human .states {
  width: 136px;
  padding: 3px 8px 0 14px;
}

.human .states li {
  height: 48px;
  text-align: center;
}

.human .rank {
  width: 18px;
  height: 18px;
  font-size: 14px;
  line-height: 16px;
}

.human .state {
  margin-left: 16px;
}

.human .caption {
  margin: 46px 38px 0 0;
  font-size: 48px;
}

/* generated dashboard */
.script .dashboard {
  margin-right: 22px;
}

.script .shelf {
  width: 8px;
}

.script .side {
  width: 119px;
  background: #e5e6f6;
  color: #44496b;
}

.side-link {
  display: block;
  font-size: 15px;
  line-height: 24px;
  color: #9496ad;
}

.side-link.strong {
  margin-top: 16px;
  font-weight: 500;
  color: #4c5175;
}

.script .side h3 {
  margin-top: 11px;
  font-size: 15px;
  line-height: 22px;
  font-weight: 500;
}

.hint {
  font-size: 13px;
  line-height: 14px;
  color: #9698ae;
  white-space: nowrap;
}

.param {
  display: flex;
  justify-content: space-between;
  padding: 2px 3px 0 1px;
  font-size: 12px;
  font-weight: 500;
  line-height: 16px;
  color: #333;
  white-space: nowrap;
}

.param .picker {
  width: 55px;
  margin-top: 2px;
  font-size: 12px;
  font-weight: 400;
}

.param select {
  height: 16px;
  line-height: 14px;
  padding: 0 3px;
  background: linear-gradient(#dcdce4, #dcdce4) 38px 0 / 1px 100% no-repeat #f3f3fa;
  border: 1px solid #d4d5e0;
}

.hint.gap {
  margin-top: 31px;
  margin-bottom: 7px;
}

.note {
  margin-top: 26px;
  font-size: 11px;
  line-height: 15px;
  color: #9294ab;
}

.note.pale {
  margin-top: 1px;
  color: #a9abc0;
}

.script .main {
  background: #fff;
  padding-bottom: 3px;
}

.script .headline {
  padding: 8px 0 0 3px;
}

.script .kpi-inner {
  column-gap: 5px;
  padding-right: 4px;
}

.script .kpi-text {
  width: 79px;
}

.script .kpi-label, .script .kpi-text strong {
  padding-right: 2px;
}

.script .badge {
  height: 32px;
  margin-top: 8px;
  padding-right: 3px;
  line-height: 32px;
}

.script .spark {
  margin-left: 6px;
  padding-top: 2px;
}

.script .spark svg {
  height: 67px;
}

.script .cards {
  grid-template-columns: 378fr 178fr 265fr;
  gap: 7px;
  margin: 0 3px;
}

.script .card {
  position: relative;
  border: 1px solid #b0b0b0;
}

.script .trend {
  grid-column: 1 / 3;
  height: 399px;
}

.script .location, .script .subcats {
  height: 252px;
}

.script .subcats {
  grid-column: 2 / 4;
}

.script h2 {
  font-size: 16px;
  line-height: 24px;
  color: #3c4169;
  text-align: center;
}

.script h2 b, .script h2 strong {
  font-weight: 400;
}

.script .makers h2 {
  padding-left: 5px;
  text-align: left;
}

.script .plot-wrap {
  margin-top: 2px;
}

.script .y-axis {
  width: 37px;
  height: 264px;
}

.script .months {
  padding-left: 6px;
}

.script .column {
  height: 264px;
}

.script .fill {
  background: #abb0c6;
}

.script .column .fill, .script .column .goal {
  width: 33px;
}

.script .goal {
  background: #567fae;
}

.script .hit {
  height: 24px;
}

.script .diff {
  height: 60px;
}

.script .num {
  height: 23px;
}

.script .rows {
  padding: 0 3px 0 5px;
}

.script .makers .row {
  height: 75px;
  grid-template-columns: 64px 83px 39px 1fr;
}

.script .makers .name {
  line-height: 18px;
}

.script .makers .track {
  height: 55px;
}

.script .track .goal {
  height: 100%;
}

.null-tag {
  position: absolute;
  right: 4px;
  bottom: 4px;
  width: 69px;
  height: 20px;
  border-radius: 2px;
  background: rgba(150, 150, 150, 0.8);
  color: #fff;
  font-size: 12px;
  font-weight: 600;
}

.script .subcats .row {
  height: 45px;
  grid-template-columns: 64px 63px 60px 1fr 72px;
}

.script .subcats .name {
  font-size: 13px;
  color: #888;
}

.script .subcats .dot {
  width: 10px;
  height: 10px;
  background: #86cf78;
}

.script .subcats .track {
  height: 33px;
}

.script .share {
  align-items: center;
  font-size: 12px;
  color: #444;
}

.script .share svg {
  width: 22px;
  height: 22px;
  transform: scaleX(-1);
}

.map-box {
  position: relative;
  width: 257px;
}

.map-box .map {
  display: block;
  width: 100%;
  height: 226px;
}

.map-box small {
  position: absolute;
  left: 3px;
  bottom: 0;
  font-size: 10px;
  color: #555;
}

.country {
  position: absolute;
  left: 102px;
  top: 186px;
  font-size: 7px;
  color: #aaa;
}

.grey {
  fill: #e9e9e9;
}

.amber {
  fill: #f0994a;
}

.navy {
  fill: #6389b5;
}

.amber path, .navy path, .edge {
  stroke: #54606c;
}

.edge {
  fill: none;
}

.script .bubble {
  fill: #abb0c6;
  stroke: #333a52;
}

.script .states {
  flex: 1;
  padding: 0 3px 0 18px;
}

.script .states li {
  height: 45px;
}

.script .rank {
  width: 24px;
  height: 24px;
  font-size: 16px;
  line-height: 22px;
}

.script .state {
  padding-top: 16px;
  text-align: right;
}

.script .caption {
  margin: 57px 0 0 62px;
}

/* sheet tabs and status line */
.sheets {
  display: flex;
  height: 29px;
  background: #e6e6e6;
  border-top: 1px solid #ccc;
  font-size: 12px;
  line-height: 29px;
  color: #666;
  white-space: nowrap;
}

.sheets a {
  padding: 0 15px 0 5px;
  border-right: 1px solid #d0d0d0;
}

.script .sheets {
  justify-content: flex-end;
}

.human .sheets a {
  padding-left: 0;
  padding-right: 10px;
}

.sheets a.active {
  padding-right: 10px;
  background: #fafafa;
}

.sheets a svg {
  margin-right: 3px;
  vertical-align: -1px;
}

.sheets svg {
  fill: none;
  stroke: #777;
}

.sheets button {
  flex: none;
  width: 26px;
  border-right: 1px solid #d0d0d0;
  display: grid;
  place-items: center;
}

.status {
  display: flex;
  justify-content: flex-end;
  height: 21px;
  background: #ebebeb;
  border-top: 1px solid #d4d4d4;
  font-size: 12px;
}

.user {
  display: flex;
  align-items: center;
  gap: 7px;
  width: 126px;
  padding: 0 8px 0 5px;
  border-left: 1px solid #d4d4d4;
}

.user svg {
  fill: none;
  stroke: #555;
}

.user .tri {
  margin-left: auto;
  fill: #222;
  stroke: none;
}

.cell {
  width: 26px;
  border-left: 1px solid #d4d4d4;
}

.pager {
  display: flex;
  align-items: center;
  justify-content: flex-end;
  width: 104px;
  padding-right: 4px;
  border-left: 1px solid #d4d4d4;
}

.pager svg {
  fill: #b5b5b5;
}

.script .pager svg {
  fill: #444;
}

.modes {
  display: flex;
  align-items: center;
  width: 54px;
  padding-left: 4px;
  border-left: 1px solid #d4d4d4;
}

/* editor sliver */
.editor {
  display: flex;
  flex-direction: column;
  min-width: 0;
  background: #1e1e1e;
}

.editor svg {
  fill: none;
  stroke: #ccc;
}

.editor-title {
  height: 29px;
  padding: 8px 15px 0 0;
  background: #333;
  text-align: right;
  line-height: 12px;
}

.editor-tabs {
  display: flex;
  align-items: center;
  gap: 12px;
  height: 35px;
  padding-left: 7px;
  background: #252526;
}

.minimap {
  height: 90px;
  padding-top: 27px;
  border-bottom: 1px solid #444;
}

.editor-panel {
  display: flex;
  align-items: center;
  gap: 13px;
  height: 36px;
  padding-left: 7px;
}

.editor-status {
  display: flex;
  align-items: center;
  justify-content: space-between;
  height: 21px;
  margin-top: auto;
  padding: 0 12px 0 2px;
  background: #007acc;
  color: #fff;
  font-size: 12px;
}

.edge-strip {
  background: #858c93;
}

/* taskbar */
.taskbar {
  display: flex;
  justify-content: space-between;
  height: 49px;
  background: #eee;
  border-top: 1px solid #d8d8d8;
}

.apps {
  display: flex;
  gap: 4px;
  padding: 4px 0 4px 13px;
}

.apps button {
  position: relative;
  display: grid;
  place-items: center;
  width: 40px;
  border-radius: 4px;
}

.apps .active {
  background: #fafafa;
}

.open::after {
  content: "";
  position: absolute;
  bottom: 0;
  left: 17px;
  width: 6px;
  height: 3px;
  border-radius: 2px;
  background: #8a8a8a;
}

.open.active::after {
  left: 12px;
  width: 16px;
  background: #5b7487;
}

.tray {
  display: flex;
  align-items: center;
  gap: 16px;
  padding-right: 18px;
}

.temp {
  width: 16px;
  background: #107c41;
  color: #fff;
  font-size: 10px;
  line-height: 16px;
  text-align: center;
}

.ime {
  font-size: 14px;
}

.wide {
  margin: 0 5px 0 8px;
}

.tray svg:last-of-type {
  margin-left: -8px;
}

.clock {
  font-size: 12px;
  line-height: 16px;
  text-align: right;
}
</style>
